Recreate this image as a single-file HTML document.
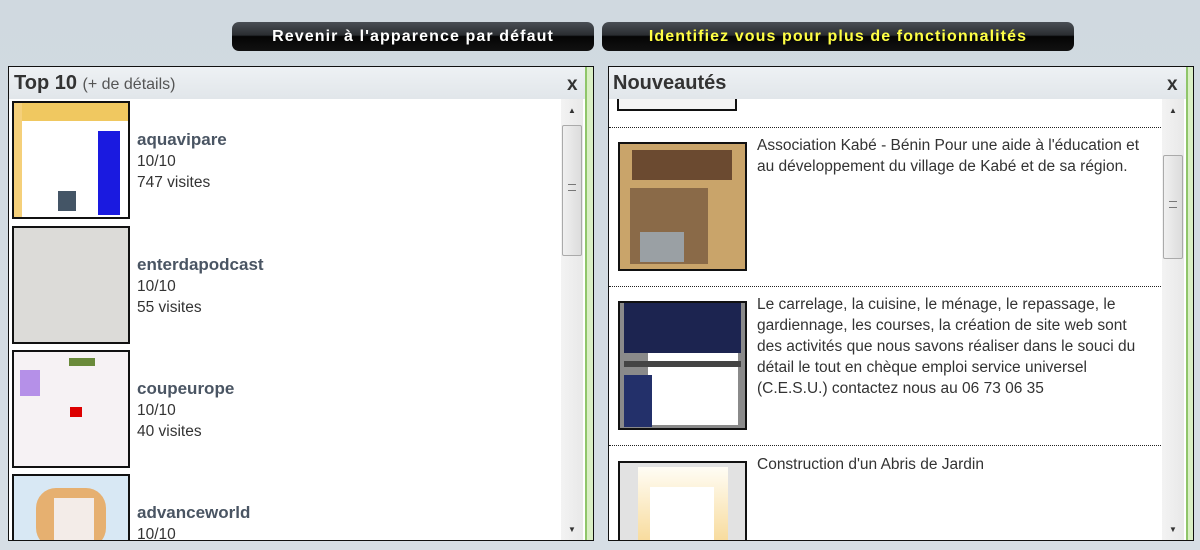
<!DOCTYPE html>
<html><head><meta charset="utf-8"><style>
*{margin:0;padding:0;box-sizing:border-box}
body{width:1200px;height:550px;overflow:hidden;background:linear-gradient(#d0d9e0,#d6dee5);font-family:"Liberation Sans",Arial,sans-serif;position:relative}
.a{position:absolute}
.btn{position:absolute;top:22px;height:29px;border-radius:7px;background:linear-gradient(#4a4f55 0,#2a2d31 45%,#050505 50%,#111 100%);font-family:"Liberation Sans",Arial,sans-serif;font-weight:bold;font-size:16px;line-height:29px;text-align:center;letter-spacing:1.1px}
.panel{position:absolute;top:66px;height:475px;border:1px solid #111;background:#fff;overflow:hidden}
.hd{position:absolute;left:0;top:0;right:0;height:32px;background:linear-gradient(#eef1f4,#e1e6ea)}
.title{position:absolute;left:5px;top:5px;font-size:20px;font-weight:bold;color:#333}
.x{position:absolute;top:7px;font-size:19px;font-weight:bold;color:#333}
.green{position:absolute;top:0;bottom:0;width:9px;background:#d9efc4;border-left:2px solid #8fc56a}
.sb{position:absolute;top:32px;bottom:0;width:22px;background:linear-gradient(90deg,#f3f3f3,#e8e8e8)}
.thumbsb{position:absolute;left:1px;width:20px;border:1px solid #aaa;border-radius:2px;background:linear-gradient(90deg,#f0f0f0,#dcdcdc)}
.th{position:absolute;border:2px solid #111;overflow:hidden}
.nm{position:absolute;font-size:17px;color:#4a5563;font-weight:bold}
.t{position:absolute;font-size:15.5px;color:#333;line-height:21px}
.dot{position:absolute;height:0;border-top:1px dotted #222}
</style></head><body>
<div class="btn" style="left:232px;width:362px;color:#fff">Revenir à l'apparence par défaut</div>
<div class="btn" style="left:602px;width:472px;color:#ffff44">Identifiez vous pour plus de fonctionnalités</div>

<div class="panel" style="left:8px;width:586px">
 <div class="hd"></div>
 <div class="title">Top 10 <span style="font-size:16px;font-weight:normal;color:#555">(+ de détails)</span></div>
 <div class="x" style="left:558px">x</div>

 <div class="th" style="left:3px;top:34px;width:118px;height:118px;background:#fff">
  <div class="a" style="left:0;top:0;width:114px;height:18px;background:#f0c860"></div>
  <div class="a" style="left:0;top:0;width:8px;height:114px;background:#f5d07a"></div>
  <div class="a" style="left:84px;top:28px;width:22px;height:84px;background:#1a1ae0"></div>
  <div class="a" style="left:44px;top:88px;width:18px;height:20px;background:#456"></div>
 </div>
 <div class="nm" style="left:128px;top:63px">aquavipare</div>
 <div class="t" style="left:128px;top:84px">10/10<br>747 visites</div>

 <div class="th" style="left:3px;top:159px;width:118px;height:118px;background:#dcdbd8"></div>
 <div class="nm" style="left:128px;top:188px">enterdapodcast</div>
 <div class="t" style="left:128px;top:209px">10/10<br>55 visites</div>

 <div class="th" style="left:3px;top:283px;width:118px;height:118px;background:#f6f2f4">
  <div class="a" style="left:6px;top:18px;width:20px;height:26px;background:#b590e8"></div>
  <div class="a" style="left:56px;top:55px;width:12px;height:10px;background:#d00"></div>
  <div class="a" style="left:55px;top:6px;width:26px;height:8px;background:#6a8a3a"></div>
 </div>
 <div class="nm" style="left:128px;top:312px">coupeurope</div>
 <div class="t" style="left:128px;top:333px">10/10<br>40 visites</div>

 <div class="th" style="left:3px;top:407px;width:118px;height:80px;background:#d8e8f4">
  <div class="a" style="left:22px;top:12px;width:70px;height:60px;background:#e6b070;border-radius:20px"></div>
  <div class="a" style="left:40px;top:22px;width:40px;height:50px;background:#f3ece8"></div>
 </div>
 <div class="nm" style="left:128px;top:436px">advanceworld</div>
 <div class="t" style="left:128px;top:457px">10/10</div>

 <div class="sb" style="left:552px"><div class="a" style="left:7px;top:7px;font-size:8px;color:#333">▲</div>
  <div class="thumbsb" style="top:26px;height:131px"><div class="a" style="left:5px;top:58px;width:8px;height:7px;border-top:1px solid #777;border-bottom:1px solid #777"></div></div>
  <div class="a" style="left:7px;bottom:6px;font-size:8px;color:#333">▼</div></div>
 <div class="green" style="left:576px"></div>
</div>

<div class="panel" style="left:608px;width:586px">
 <div class="hd"></div>
 <div class="title" style="left:4px">Nouveautés</div>
 <div class="x" style="left:558px">x</div>

 <div class="a" style="left:8px;top:32px;width:120px;height:12px;border:2px solid #111;border-top:none;background:#f4f4f4"></div>
 <div class="dot" style="left:0;top:60px;width:552px"></div>

 <div class="th" style="left:9px;top:75px;width:129px;height:129px;background:#c9a46a">
  <div class="a" style="left:12px;top:6px;width:100px;height:30px;background:#6b4a30"></div>
  <div class="a" style="left:10px;top:44px;width:78px;height:76px;background:#8a6a48"></div>
  <div class="a" style="left:20px;top:88px;width:44px;height:30px;background:#9aa0a4"></div>
 </div>
 <div class="t" style="left:148px;top:68px">Association Kabé - Bénin Pour une aide à l'éducation et<br>au développement du village de Kabé et de sa région.</div>
 <div class="dot" style="left:0;top:219px;width:552px"></div>

 <div class="th" style="left:9px;top:234px;width:129px;height:129px;background:#8a8a8a">
  <div class="a" style="left:4px;top:0;width:117px;height:50px;background:#1c2450"></div>
  <div class="a" style="left:28px;top:50px;width:90px;height:72px;background:#fff"></div>
  <div class="a" style="left:4px;top:72px;width:28px;height:52px;background:#23306a"></div>
  <div class="a" style="left:4px;top:58px;width:117px;height:6px;background:#444"></div>
 </div>
 <div class="t" style="left:148px;top:227px">Le carrelage, la cuisine, le ménage, le repassage, le<br>gardiennage, les courses, la création de site web sont<br>des activités que nous savons réaliser dans le souci du<br>détail le tout en chèque emploi service universel<br>(C.E.S.U.) contactez nous au 06 73 06 35</div>
 <div class="dot" style="left:0;top:378px;width:552px"></div>

 <div class="th" style="left:9px;top:394px;width:129px;height:90px;background:#e2e2e2">
  <div class="a" style="left:18px;top:4px;width:90px;height:90px;background:linear-gradient(#fffdf5,#f6d48a)"></div>
  <div class="a" style="left:30px;top:24px;width:64px;height:70px;background:#fff"></div>
 </div>
 <div class="t" style="left:148px;top:387px">Construction d'un Abris de Jardin</div>

 <div class="sb" style="left:553px"><div class="a" style="left:7px;top:7px;font-size:8px;color:#333">▲</div>
  <div class="thumbsb" style="top:56px;height:104px"><div class="a" style="left:5px;top:45px;width:8px;height:7px;border-top:1px solid #777;border-bottom:1px solid #777"></div></div>
  <div class="a" style="left:7px;bottom:6px;font-size:8px;color:#333">▼</div></div>
 <div class="green" style="left:577px"></div>
</div>
</body></html>
